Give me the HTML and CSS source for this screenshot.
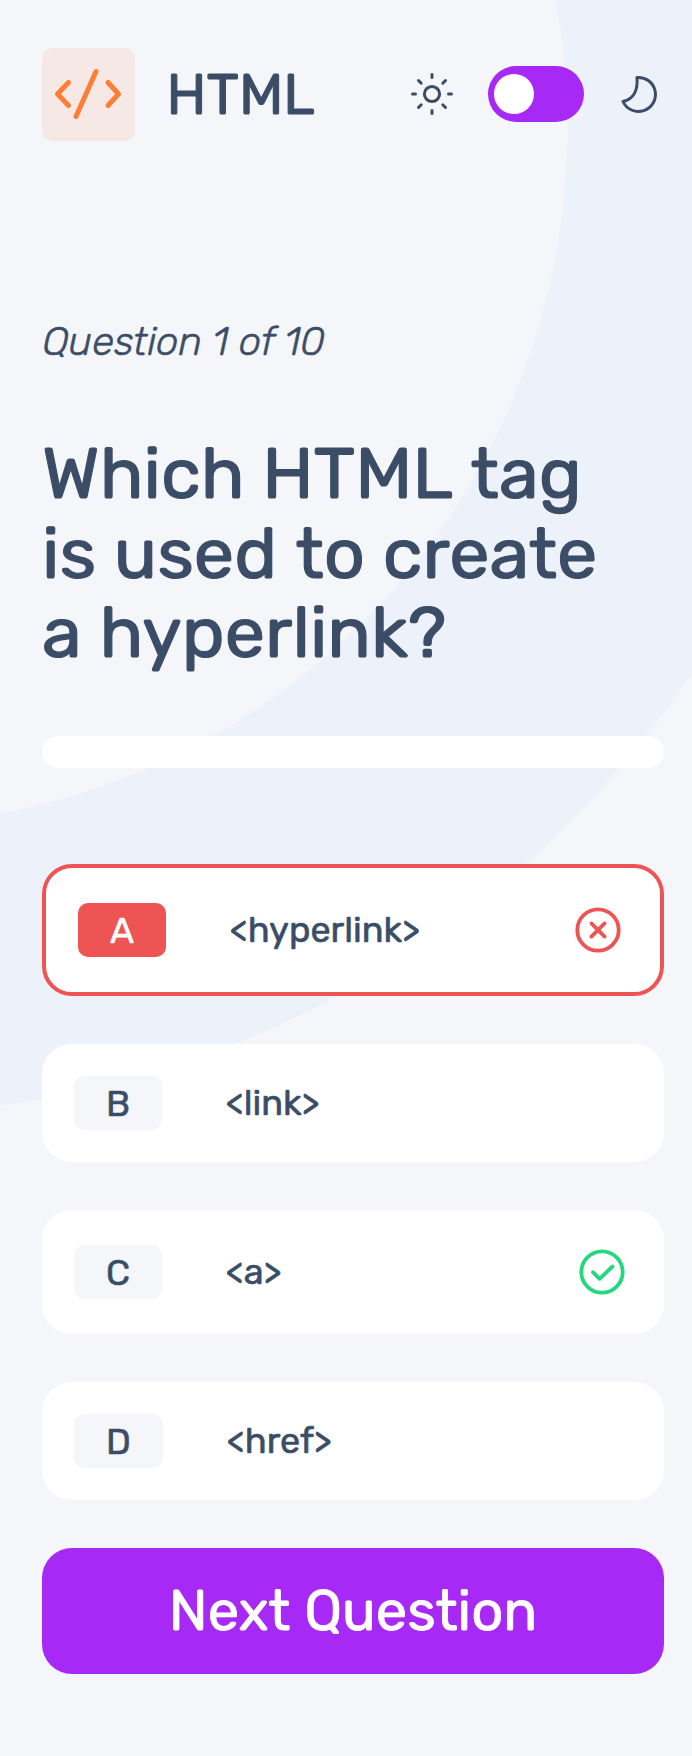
FILE: index.html
```html
<!DOCTYPE html>
<html lang="en">
<head>
<meta charset="utf-8">
<title>HTML Quiz</title>
<link rel="stylesheet" href="styles.css">
</head>
<body>
<svg class="backdrop" viewBox="0 0 692 1756" aria-hidden="true"><circle cx="-130" cy="128.500" r="841.500"/></svg>
<main class="quiz">
  <header class="header">
    <div class="subject">
      <span class="subject-icon">
        <svg width="93" height="93" viewBox="0 0 93 93"><path d="M26.500 34.500 15.500 46 26.500 57.500M66 34.500 76.500 46 66 57.500M54 23.500 34 68.500"/></svg>
      </span>
      <span class="subject-name">HTML</span>
    </div>
    <div class="theme">
      <svg class="sun" width="48" height="48" viewBox="0 0 48 48"><circle cx="24" cy="24" r="7.600"/><path d="M24 4.500v3M24 40.500v3M4.500 24h3M40.500 24h3M10.500 10.500l2.700 2.700M34.800 34.800l2.700 2.700M10.500 37.500l2.700-2.700M34.800 13.200l2.700-2.700"/></svg>
      <span class="toggle"><span class="knob"></span></span>
      <svg class="moon" width="48" height="48" viewBox="0 0 48 48"><path d="M22 7.500c1 13-3.500 22-14 24A17 17 0 1 0 22 7.500Z"/></svg>
    </div>
  </header>
  <p class="counter">Question 1 of 10</p>
  <h1 class="question">Which HTML <span class="tag-word">tag</span><br>is used <span class="to-word">to create</span><br>a hyperlink?</h1>
  <div class="progress"></div>
  <div class="answers">
    <div class="answer wrong"><span class="badge">A</span><span class="label">&lt;hyperlink&gt;</span>
      <svg class="mark" width="54" height="54" viewBox="0 0 54 54"><circle cx="27" cy="27" r="20.700"/><path d="M20.400 20.400 33.600 33.600M33.600 20.400 20.400 33.600"/></svg></div>
    <div class="answer"><span class="badge">B</span><span class="label">&lt;link&gt;</span></div>
    <div class="answer correct"><span class="badge">C</span><span class="label">&lt;a&gt;</span>
      <svg class="mark" width="54" height="54" viewBox="0 0 54 54"><circle cx="27" cy="27" r="20.700"/><path d="M18 27.200 24.600 33.800 37.500 21.500"/></svg></div>
    <div class="answer"><span class="badge wide">D</span><span class="label">&lt;href&gt;</span></div>
  </div>
  <button class="next">Next Question</button>
</main>
</body>
</html>
```
FILE: styles.css
```css
* { box-sizing: border-box; }
body {
  margin: 0;
  width: 692px;
  height: 1756px;
  overflow: hidden;
  background: #f4f6fa;
  color: #3b4d66;
  font-family: Rubik, Roboto, "Liberation Sans", sans-serif;
  -webkit-text-stroke: 0 currentColor;
}
.backdrop { position: absolute; inset: 0; width: 692px; height: 1756px; z-index: -1; }
.backdrop circle { fill: none; stroke: #ecf1fa; stroke-width: 288; }
.quiz { display: flex; flex-direction: column; padding: 48px 28px 0 42px; }
.header { display: flex; justify-content: space-between; align-items: center; height: 93px; }
.subject { display: flex; align-items: center; gap: 31.500px; }
.subject-icon { width: 93px; height: 93px; border-radius: 10px; background: #f6e9e5; }
.subject-icon svg { display: block; fill: none; stroke: #ff7e35; stroke-width: 5; stroke-linecap: round; stroke-linejoin: round; }
.subject-name { font-size: 56px; line-height: 66px; -webkit-text-stroke-width: 1px; }
.theme { display: flex; align-items: center; gap: 32px; margin-bottom: 1px; }
.theme svg { fill: none; stroke: #3b4d66; stroke-width: 3; stroke-linecap: round; stroke-linejoin: round; }
.toggle { display: flex; align-items: center; width: 96px; height: 56px; padding: 0 6px; border-radius: 28px; background: #a729f5; }
.knob { width: 40px; height: 40px; border-radius: 50%; background: #fff; }
.moon { margin: 0 1px 0 -1px; }
.counter { margin: 177px 0 0; font-size: 40px; font-style: italic; font-weight: 300; line-height: 47px; -webkit-text-stroke-width: .6px; }
.question { margin: 69px 0 0; font-size: 72px; font-weight: 400; line-height: 79.500px; -webkit-text-stroke-width: 1.200px; }
.tag-word { margin-left: 2px; }
.to-word { margin-left: 1px; }
.progress { height: 32px; margin-top: 63px; border-radius: 16px; background: #fff; }
.answers { display: flex; flex-direction: column; gap: 48px; margin-top: 96px; }
.answer { display: flex; align-items: center; height: 118px; padding: 0 32px; border-radius: 30px; background: #fff; font-size: 36px; -webkit-text-stroke-width: .6px; }
.badge { width: 88px; height: 54px; margin-right: 64px; border-radius: 10px; background: #f4f6fa; line-height: 55px; text-align: center; }
.badge.wide { width: 89px; }
.label { line-height: 54px; padding-top: 1px; }
.mark { margin: 0 3px 0 auto; fill: none; stroke-width: 3.800; stroke-linecap: round; stroke-linejoin: round; }
.wrong { height: 132px; border: 4px solid #ee5454; }
.wrong .badge { background: #ee5454; color: #fff; }
.wrong .mark { stroke: #ee5454; }
.correct { height: 124px; }
.correct .mark { stroke: #26d782; }
.next { height: 126px; margin: 48px 0 0; padding: 1px 0 0; border: 0; border-radius: 30px; background: #a729f5; color: #fff; font: inherit; font-size: 56px; line-height: 66px; text-align: center; -webkit-text-stroke: .8px #fff; }
```
